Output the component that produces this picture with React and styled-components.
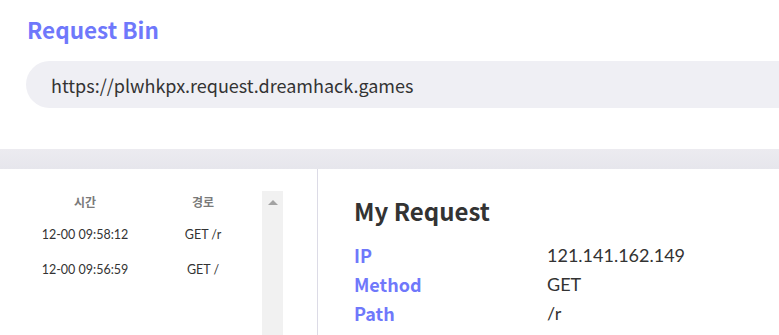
import React from "react";
import styled, { createGlobalStyle } from "styled-components";

const Global = createGlobalStyle`
  html, body { margin: 0; padding: 0; background: #fff; }
  body { font-family: "Noto Sans CJK KR", "Noto Sans", sans-serif; overflow: hidden; }
`;

const Page = styled.div`
  width: 779px;
  height: 335px;
  display: flex;
  flex-direction: column;
  overflow: hidden;
`;

const Header = styled.header`
  padding: 13px 0 0 26px;
  height: 149px;
  box-sizing: border-box;
`;

const Title = styled.h1`
  margin: 0 0 0 1px;
  font-size: 22.5px;
  line-height: 32px;
  font-weight: 700;
  color: #6f78fb;
`;

const UrlBox = styled.div`
  margin-top: 16px;
  height: 47px;
  display: flex;
  align-items: center;
  padding-left: 25px;
  background: #efeff4;
  border-radius: 24px 0 0 24px;
  font-size: 18px;
  color: #333;
`;

const Divider = styled.div`
  height: 20px;
  background: linear-gradient(#ecebf0, #e6e6ec);
`;

const Body = styled.div`
  flex: 1;
  display: flex;
  min-height: 0;
`;

const ListPane = styled.aside`
  width: 318px;
  border-right: 1px solid #dcdbe6;
  display: flex;
  padding-left: 26px;
  box-sizing: border-box;
`;

const Table = styled.div`
  width: 236px;
  padding-top: 22px;
  font-family: Lato, "Noto Sans CJK KR", sans-serif;
`;

const Row = styled.div`
  display: grid;
  grid-template-columns: 1fr 1fr;
  height: ${(p) => (p.$head ? "20px" : "35px")};
  align-items: center;
  text-align: center;
  font-size: ${(p) => (p.$head ? "12px" : "12.5px")};
  font-weight: ${(p) => (p.$head ? 700 : 400)};
  color: ${(p) => (p.$head ? "#7a7a7a" : "#333")};
  font-family: ${(p) => (p.$head ? '"Noto Sans CJK KR", sans-serif' : "inherit")};
  margin-bottom: ${(p) => (p.$head ? "6px" : "0")};
`;

const Scrollbar = styled.div`
  margin-top: 22px;
  width: 21px;
  background: #f1f1f1;
  display: flex;
  justify-content: center;
  padding-top: 9px;
  box-sizing: border-box;
`;

const Detail = styled.section`
  flex: 1;
  padding: 25px 0 0 36px;
`;

const DetailTitle = styled.h2`
  margin: 0 0 12px;
  font-size: 24px;
  line-height: 34px;
  font-weight: 700;
  color: #333;
`;

const InfoRow = styled.div`
  display: grid;
  grid-template-columns: 193px 1fr;
  height: 29px;
  align-items: center;
`;

const Label = styled.span`
  font-size: 18px;
  font-weight: 700;
  color: #6f78fb;
`;

const Value = styled.span`
  font-family: Lato, sans-serif;
  font-size: 18px;
  color: #333;
`;

const rows = [
  ["12-00 09:58:12", "GET /r"],
  ["12-00 09:56:59", "GET /"],
];

const info = [
  ["IP", "121.141.162.149"],
  ["Method", "GET"],
  ["Path", "/r"],
];

export default function App() {
  return (
    <Page>
      <Global />
      <Header>
        <Title>Request Bin</Title>
        <UrlBox>https://plwhkpx.request.dreamhack.games</UrlBox>
      </Header>
      <Divider />
      <Body>
        <ListPane>
          <Table>
            <Row $head>
              <span>시간</span>
              <span>경로</span>
            </Row>
            {rows.map(([t, p]) => (
              <Row key={t}>
                <span>{t}</span>
                <span>{p}</span>
              </Row>
            ))}
          </Table>
          <Scrollbar>
            <svg width="10" height="5" viewBox="0 0 10 5">
              <path d="M0 5 L5 0 L10 5 Z" fill="#a3a3a3" />
            </svg>
          </Scrollbar>
        </ListPane>
        <Detail>
          <DetailTitle>My Request</DetailTitle>
          {info.map(([k, v]) => (
            <InfoRow key={k}>
              <Label>{k}</Label>
              <Value>{v}</Value>
            </InfoRow>
          ))}
        </Detail>
      </Body>
    </Page>
  );
}
